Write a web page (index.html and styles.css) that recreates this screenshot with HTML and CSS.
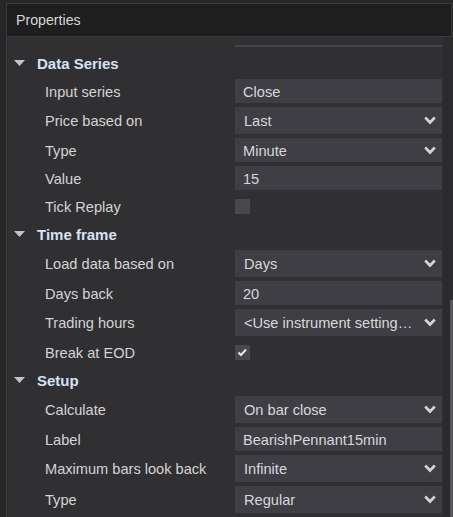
FILE: index.html
```html
<!DOCTYPE html>
<html lang="en">
<head>
    <meta charset="UTF-8">
    <title>Properties</title>
    <link rel="stylesheet" href="styles.css">
</head>
<body>
<div class="window">
    <div class="title">Properties</div>

    <div class="panel">
        <div class="grid">
            <div class="row-cut"><div class="cut-edge"></div></div>

            <div class="group">
                <svg class="arrow" width="11" height="6" viewBox="0 0 11 6"><path d="M0 0H11L5.5 6Z"/></svg>
                <span>Data Series</span>
            </div>
            <div class="row">
                <label>Input series</label>
                <div class="field text">Close</div>
            </div>
            <div class="row">
                <label>Price based on</label>
                <div class="field select">Last<svg class="chev" width="12" height="9" viewBox="0 0 12 9"><path d="M1.2 1.5L6 6.5L10.8 1.5"/></svg></div>
            </div>
            <div class="row">
                <label>Type</label>
                <div class="field select small">Minute<svg class="chev" width="12" height="9" viewBox="0 0 12 9"><path d="M1.2 1.5L6 6.5L10.8 1.5"/></svg></div>
            </div>
            <div class="row">
                <label>Value</label>
                <div class="field text">15</div>
            </div>
            <div class="row check-row">
                <label>Tick Replay</label>
                <div class="check"></div>
            </div>

            <div class="group">
                <svg class="arrow" width="11" height="6" viewBox="0 0 11 6"><path d="M0 0H11L5.5 6Z"/></svg>
                <span>Time frame</span>
            </div>
            <div class="row">
                <label>Load data based on</label>
                <div class="field select">Days<svg class="chev" width="12" height="9" viewBox="0 0 12 9"><path d="M1.2 1.5L6 6.5L10.8 1.5"/></svg></div>
            </div>
            <div class="row">
                <label>Days back</label>
                <div class="field text">20</div>
            </div>
            <div class="row">
                <label>Trading hours</label>
                <div class="field select">&lt;Use instrument setting…<svg class="chev" width="12" height="9" viewBox="0 0 12 9"><path d="M1.2 1.5L6 6.5L10.8 1.5"/></svg></div>
            </div>
            <div class="row check-row">
                <label>Break at EOD</label>
                <div class="check">
                    <svg width="15" height="15" viewBox="0 0 15 15"><path d="M3.5 7.5L6 10L11 4.5"/></svg>
                </div>
            </div>

            <div class="group">
                <svg class="arrow" width="11" height="6" viewBox="0 0 11 6"><path d="M0 0H11L5.5 6Z"/></svg>
                <span>Setup</span>
            </div>
            <div class="row">
                <label>Calculate</label>
                <div class="field select">On bar close<svg class="chev" width="12" height="9" viewBox="0 0 12 9"><path d="M1.2 1.5L6 6.5L10.8 1.5"/></svg></div>
            </div>
            <div class="row">
                <label>Label</label>
                <div class="field text">BearishPennant15min</div>
            </div>
            <div class="row">
                <label>Maximum bars look back</label>
                <div class="field select">Infinite<svg class="chev" width="12" height="9" viewBox="0 0 12 9"><path d="M1.2 1.5L6 6.5L10.8 1.5"/></svg></div>
            </div>
            <div class="row">
                <label>Type</label>
                <div class="field select">Regular<svg class="chev" width="12" height="9" viewBox="0 0 12 9"><path d="M1.2 1.5L6 6.5L10.8 1.5"/></svg></div>
            </div>
        </div>

        <div class="scrollbar"><div class="thumb"></div></div>
    </div>
</div>
</body>
</html>
```

FILE: styles.css
```css
* {
    box-sizing: border-box;
}

body {
    margin: 0;
    background-color: #262626;
    font-family: 'Liberation Sans', Arial, sans-serif;
    font-size: 14.6px;
    color: #d4d4d4;
    overflow: hidden;
}

.window {
    padding: 3px 0 0 6px;
    height: 517px;
}

.title {
    height: 34px;
    padding: 0 9px;
    line-height: 33px;
    font-size: 14.2px;
    background-color: #1e1e1e;
    border: 1px solid #3a3a3a;
    color: #d8d8d8;
    width: 446px;
}

.panel {
    display: flex;
    height: 480px;
    background-color: #303033;
    border-left: 1px solid #3c3c3c;
}

.grid {
    width: 436px;
}

.row-cut {
    height: 12px;
    padding: 8px 0 0 228px;
}

.cut-edge {
    width: 207px;
    height: 2px;
    background-color: #434347;
}

.group {
    display: flex;
    align-items: center;
    height: 28px;
    padding-left: 7px;
    padding-top: 1px;
    font-weight: bold;
    font-size: 15px;
    color: #d6e2f4;
}

.arrow {
    fill: #c4c4c4;
    margin-right: 12px;
    margin-top: -1px;
}

.row {
    display: flex;
    align-items: center;
    padding: 2px 0;
    line-height: 1;
}

.row label {
    width: 228px;
    padding-left: 38px;
    padding-top: 2px;
}

.field {
    width: 207px;
    height: 24px;
    padding: 2px 8px 0;
    display: flex;
    align-items: center;
    background-color: #3e3e44;
    color: #d8d8d8;
    white-space: nowrap;
}

.select {
    height: 27px;
    justify-content: space-between;
    padding-left: 9px;
    padding-right: 6px;
}

.select.small {
    height: 24px;
    padding-left: 8px;
}

.chev {
    fill: none;
    stroke: #d4d4d4;
    stroke-width: 2.6;
    flex-shrink: 0;
    margin-top: -2px;
}

.check-row {
    height: 28px;
}

.check {
    width: 15px;
    height: 15px;
    background-color: #48484e;
}

.check svg {
    display: block;
    fill: none;
    stroke: #e8e8e8;
    stroke-width: 2;
}

.scrollbar {
    flex: 1;
    position: relative;
    background-color: #2b2b2d;
}

.thumb {
    position: absolute;
    right: 0;
    top: 263px;
    bottom: 0;
    width: 3px;
    background-color: #58585c;
}
```
